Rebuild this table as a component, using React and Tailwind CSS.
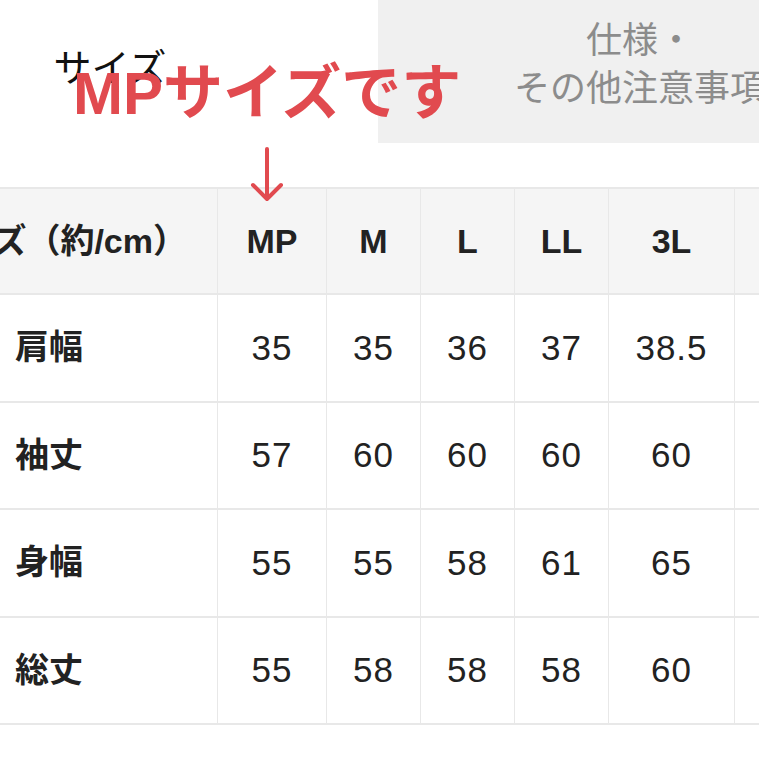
const sizes = ["MP", "M", "L", "LL", "3L", ""];

const rows = [
  { label: "肩幅", values: ["35", "35", "36", "37", "38.5", ""] },
  { label: "袖丈", values: ["57", "60", "60", "60", "60", ""] },
  { label: "身幅", values: ["55", "55", "58", "61", "65", ""] },
  { label: "総丈", values: ["55", "58", "58", "58", "60", ""] },
];

const font = { fontFamily: '"Liberation Sans", "Noto Sans CJK JP", sans-serif' };

function App() {
  return (
    <div
      className="relative w-[759px] h-[759px] overflow-hidden bg-white text-[#222]"
      style={font}
    >
      <div className="ml-[-158px] w-[1100px]">
        {/* tabs */}
        <div className="flex h-[143px]">
          <div className="w-[536px] flex items-center justify-center pb-[8px] text-[38px] text-[#111] leading-none">
            サイズ
          </div>
          <div className="w-[524px] bg-[#f0f0f0] flex flex-col items-center justify-center pb-[14px] text-[36px] leading-[48px] text-[#8c8c8c]">
            <span>仕様・</span>
            <span>その他注意事項</span>
          </div>
        </div>

        {/* size table */}
        <div className="mt-[44px] grid grid-cols-[376px_109px_94px_94px_94px_126px_150px] border-t-2 border-[#e8e8e8]">
          <div className="h-[106px] bg-[#f5f5f5] border-b-2 border-r border-[#e8e8e8] flex items-center justify-end pr-[30px] whitespace-nowrap text-[34px] font-bold">
            サイズ（約/cm）
          </div>
          {sizes.map((s, i) => (
            <div
              key={i}
              className="h-[106px] bg-[#f5f5f5] border-b-2 border-r border-[#e8e8e8] flex items-center justify-center text-[34px] font-bold"
            >
              {s}
            </div>
          ))}

          {rows.map((row) => (
            <div key={row.label} className="contents">
              <div className="h-[107.5px] border-b-2 border-r border-[#e8e8e8] flex items-center pl-[173px] text-[34px] font-bold">
                {row.label}
              </div>
              {row.values.map((v, i) => (
                <div
                  key={i}
                  className="h-[107.5px] border-b-2 border-r border-[#e8e8e8] flex items-center justify-center text-[35px] tracking-[1px]"
                >
                  {v}
                </div>
              ))}
            </div>
          ))}
        </div>
      </div>

      {/* annotation */}
      <div className="absolute left-[73px] top-[64px] text-[60px] font-bold leading-none text-[#e14a4f] whitespace-nowrap">
        MPサイズです
      </div>
      <svg
        className="absolute left-[247px] top-[146px]"
        width="40"
        height="60"
        viewBox="0 0 40 60"
        fill="none"
        stroke="#e14a4f"
        strokeWidth="4"
        strokeLinecap="round"
        strokeLinejoin="round"
      >
        <path d="M20 3 V52" />
        <path d="M6 39 L20 53 L34 39" />
      </svg>
    </div>
  );
}

export default App;
